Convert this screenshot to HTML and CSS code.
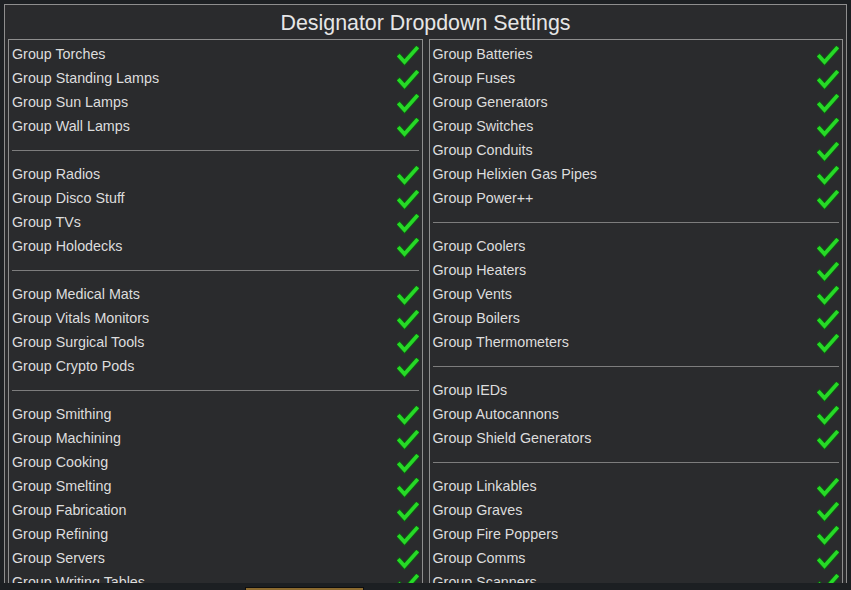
FILE: index.html
```html
<!DOCTYPE html>
<html>
<head>
<meta charset="utf-8">
<link rel="stylesheet" href="styles.css">
</head>
<body>
<svg width="0" height="0" class="defs">
  <defs>
    <symbol id="chk" viewBox="0 0 22 20">
      <polyline points="2.5,10.5 7.5,16 19.5,2.5" fill="none" stroke="#0f5c13" stroke-width="5.5" stroke-linejoin="miter" stroke-linecap="square"/>
      <polyline points="2.5,10.5 7.5,16 19.5,2.5" fill="none" stroke="#27d927" stroke-width="3.6" stroke-linejoin="miter" stroke-linecap="square"/>
    </symbol>
  </defs>
</svg>
<div class="window">
  <div class="title">Designator Dropdown Settings</div>
  <div class="columns">
    <div class="panel">
      <div class="row"><span>Group Torches</span><svg class="check"><use href="#chk"/></svg></div>
      <div class="row"><span>Group Standing Lamps</span><svg class="check"><use href="#chk"/></svg></div>
      <div class="row"><span>Group Sun Lamps</span><svg class="check"><use href="#chk"/></svg></div>
      <div class="row"><span>Group Wall Lamps</span><svg class="check"><use href="#chk"/></svg></div>
      <div class="sep"></div>
      <div class="row"><span>Group Radios</span><svg class="check"><use href="#chk"/></svg></div>
      <div class="row"><span>Group Disco Stuff</span><svg class="check"><use href="#chk"/></svg></div>
      <div class="row"><span>Group TVs</span><svg class="check"><use href="#chk"/></svg></div>
      <div class="row"><span>Group Holodecks</span><svg class="check"><use href="#chk"/></svg></div>
      <div class="sep"></div>
      <div class="row"><span>Group Medical Mats</span><svg class="check"><use href="#chk"/></svg></div>
      <div class="row"><span>Group Vitals Monitors</span><svg class="check"><use href="#chk"/></svg></div>
      <div class="row"><span>Group Surgical Tools</span><svg class="check"><use href="#chk"/></svg></div>
      <div class="row"><span>Group Crypto Pods</span><svg class="check"><use href="#chk"/></svg></div>
      <div class="sep"></div>
      <div class="row"><span>Group Smithing</span><svg class="check"><use href="#chk"/></svg></div>
      <div class="row"><span>Group Machining</span><svg class="check"><use href="#chk"/></svg></div>
      <div class="row"><span>Group Cooking</span><svg class="check"><use href="#chk"/></svg></div>
      <div class="row"><span>Group Smelting</span><svg class="check"><use href="#chk"/></svg></div>
      <div class="row"><span>Group Fabrication</span><svg class="check"><use href="#chk"/></svg></div>
      <div class="row"><span>Group Refining</span><svg class="check"><use href="#chk"/></svg></div>
      <div class="row"><span>Group Servers</span><svg class="check"><use href="#chk"/></svg></div>
      <div class="row"><span>Group Writing Tables</span><svg class="check"><use href="#chk"/></svg></div>
    </div>
    <div class="panel">
      <div class="row"><span>Group Batteries</span><svg class="check"><use href="#chk"/></svg></div>
      <div class="row"><span>Group Fuses</span><svg class="check"><use href="#chk"/></svg></div>
      <div class="row"><span>Group Generators</span><svg class="check"><use href="#chk"/></svg></div>
      <div class="row"><span>Group Switches</span><svg class="check"><use href="#chk"/></svg></div>
      <div class="row"><span>Group Conduits</span><svg class="check"><use href="#chk"/></svg></div>
      <div class="row"><span>Group Helixien Gas Pipes</span><svg class="check"><use href="#chk"/></svg></div>
      <div class="row"><span>Group Power++</span><svg class="check"><use href="#chk"/></svg></div>
      <div class="sep"></div>
      <div class="row"><span>Group Coolers</span><svg class="check"><use href="#chk"/></svg></div>
      <div class="row"><span>Group Heaters</span><svg class="check"><use href="#chk"/></svg></div>
      <div class="row"><span>Group Vents</span><svg class="check"><use href="#chk"/></svg></div>
      <div class="row"><span>Group Boilers</span><svg class="check"><use href="#chk"/></svg></div>
      <div class="row"><span>Group Thermometers</span><svg class="check"><use href="#chk"/></svg></div>
      <div class="sep"></div>
      <div class="row"><span>Group IEDs</span><svg class="check"><use href="#chk"/></svg></div>
      <div class="row"><span>Group Autocannons</span><svg class="check"><use href="#chk"/></svg></div>
      <div class="row"><span>Group Shield Generators</span><svg class="check"><use href="#chk"/></svg></div>
      <div class="sep"></div>
      <div class="row"><span>Group Linkables</span><svg class="check"><use href="#chk"/></svg></div>
      <div class="row"><span>Group Graves</span><svg class="check"><use href="#chk"/></svg></div>
      <div class="row"><span>Group Fire Poppers</span><svg class="check"><use href="#chk"/></svg></div>
      <div class="row"><span>Group Comms</span><svg class="check"><use href="#chk"/></svg></div>
      <div class="row"><span>Group Scanners</span><svg class="check"><use href="#chk"/></svg></div>
    </div>
  </div>
</div>
<div class="footer"><div class="button"></div></div>
</body>
</html>
```

FILE: styles.css
```css
html, body {
  margin: 0;
  padding: 0;
}
body {
  background: #1d2023;
  width: 851px;
  height: 590px;
  overflow: hidden;
  font-family: "Liberation Sans", Arial, sans-serif;
  color: #dddddd;
}
.defs {
  position: absolute;
  width: 0;
  height: 0;
}
.window {
  margin: 4px 4px 0 4px;
  height: 579px;
  box-sizing: border-box;
  border: 1px solid #8e8e8e;
  border-bottom: none;
  background: #2a2b2d;
  padding: 0 3px;
  overflow: hidden;
}
.title {
  height: 34px;
  line-height: 36px;
  font-size: 21.4px;
  text-align: center;
  color: #e6e6e6;
}
.columns {
  display: flex;
  gap: 6px;
}
.panel {
  width: 415px;
  box-sizing: border-box;
  border: 1px solid #8e8e8e;
  padding: 2px 3px 0 3px;
  height: 700px;
}
.row {
  height: 24px;
  line-height: 24px;
  font-size: 14.3px;
  display: flex;
  justify-content: space-between;
  align-items: center;
}
.row span {
  white-space: nowrap;
}
.check {
  width: 22px;
  height: 20px;
  margin-top: 3px;
  flex: none;
}
.sep {
  height: 24px;
  display: flex;
  align-items: center;
}
.sep::before {
  content: "";
  display: block;
  width: 100%;
  height: 1px;
  background: #7d7d7d;
  margin-top: 1px;
}
.footer {
  height: 7px;
  background: #1c1f22;
  padding: 4px 0 0 245px;
  box-sizing: border-box;
}
.button {
  width: 119px;
  height: 10px;
  box-sizing: border-box;
  border: 1px solid #0e0e0e;
  background: #8b6a2f;
}
```
